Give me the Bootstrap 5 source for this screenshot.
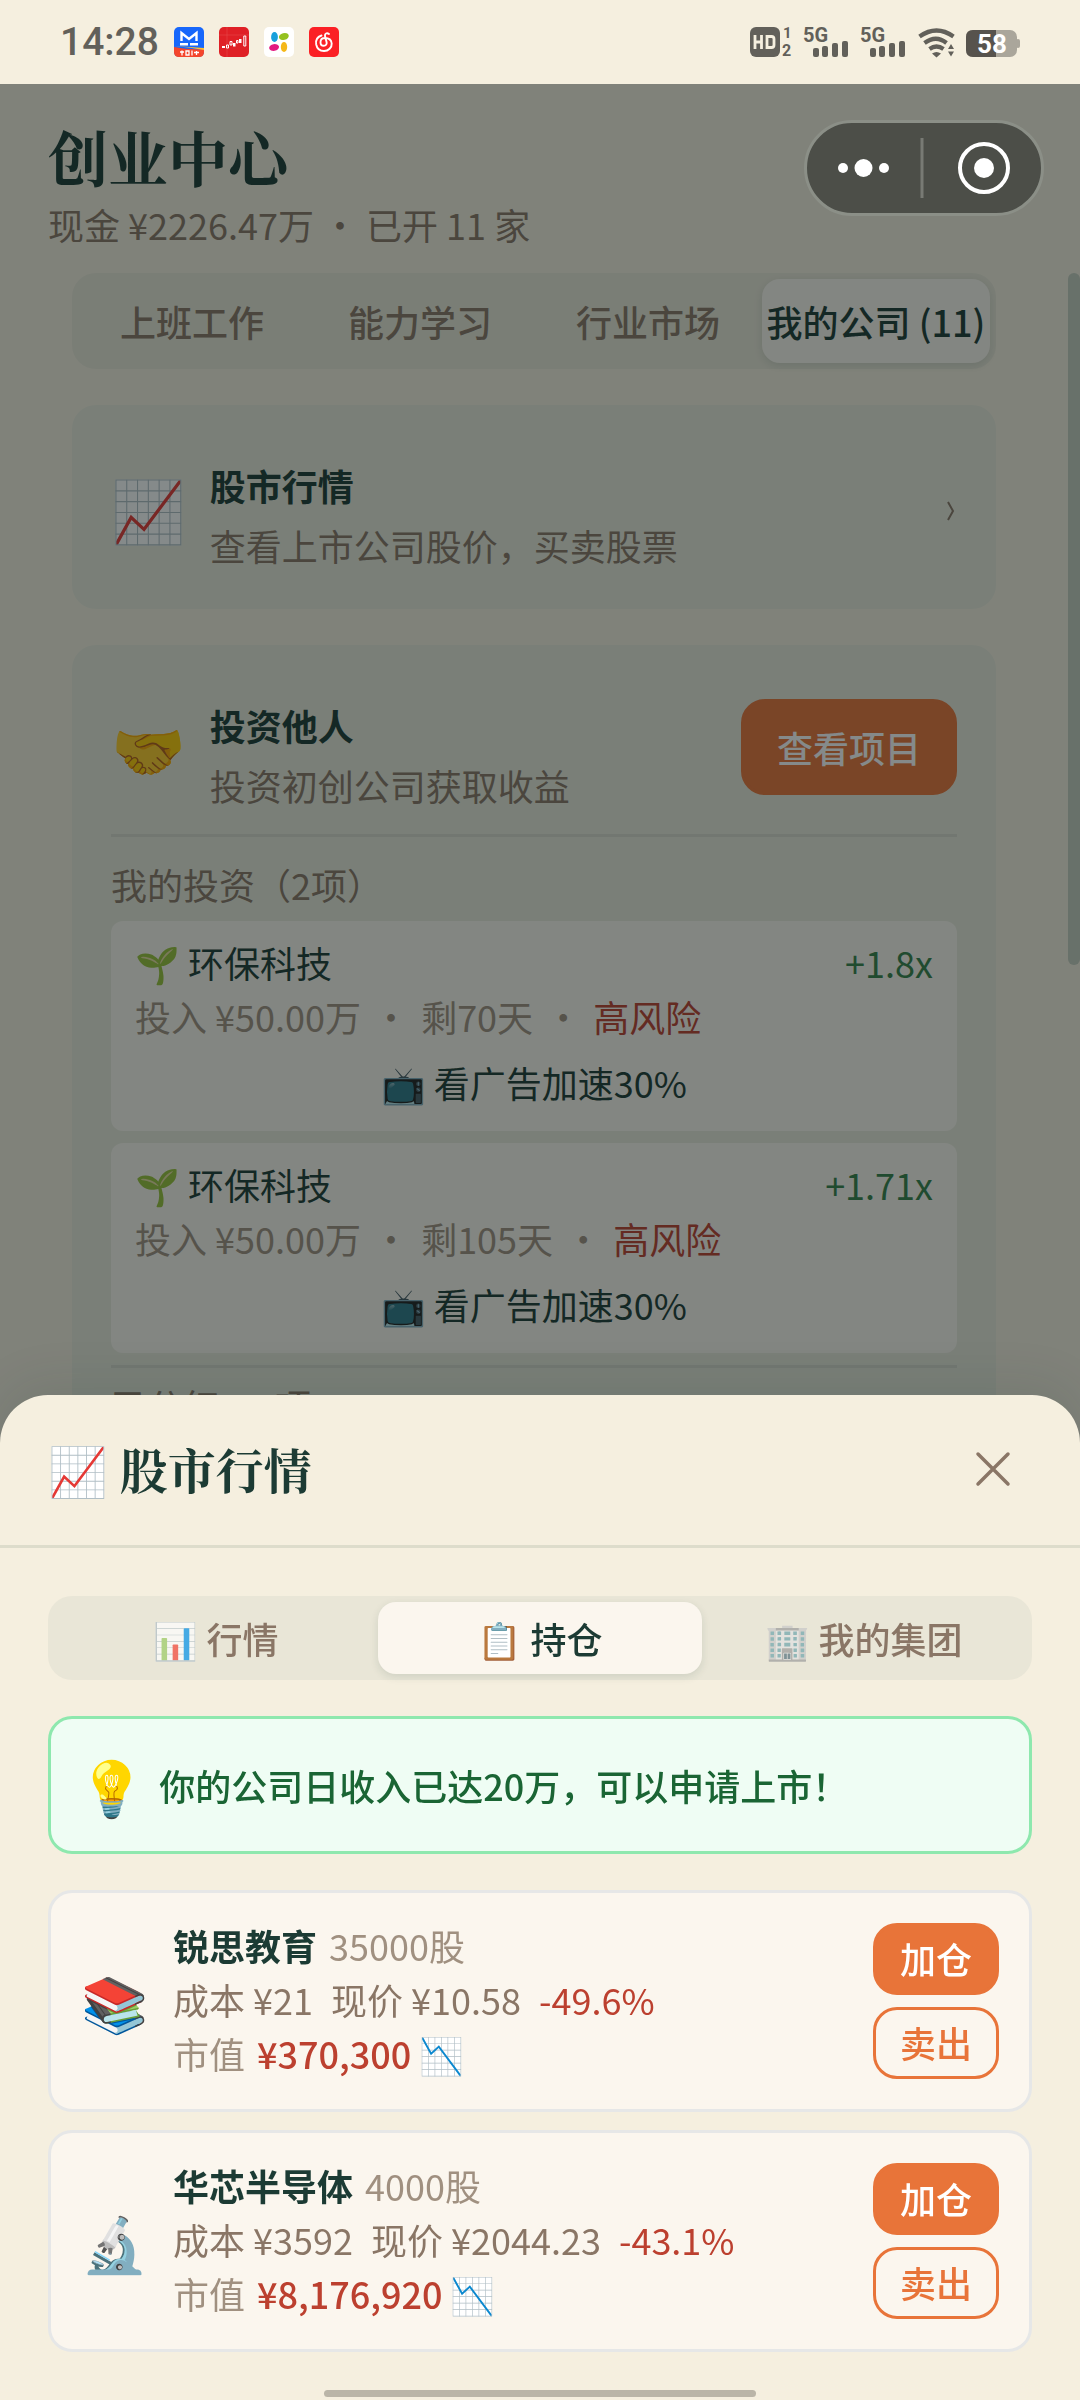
<!DOCTYPE html>
<html lang="zh-CN">
<head>
<meta charset="utf-8">
<meta name="viewport" content="width=device-width, initial-scale=1">
<title>创业中心</title>
<link href="https://cdn.jsdelivr.net/npm/bootstrap@5.3.0/dist/css/bootstrap.min.css" rel="stylesheet">
<style>
:root{--cream:#f5efdf;--ink:#1c3b34;--muted:#8a7666;--soft:#a09080;--orange:#e87439;--red:#bc402f;--paper:#fbf6ee}
body{font-family:"Noto Sans CJK SC","Noto Color Emoji",sans-serif;font-size:36px;line-height:54px;color:var(--ink);background:var(--cream)}
button{font-family:inherit}
.serif-title{font-family:"Noto Serif CJK SC","Noto Serif SC","Noto Color Emoji",serif;font-weight:700;margin:0}
.screen{min-height:100vh}
.status{height:84px;padding:0 54px 0 60px;background:var(--cream);color:#62605a}
.clock{font-family:Roboto,sans-serif;font-size:39px;font-weight:500}
.status-apps{gap:15px}
.page-head{padding:36px 36px 17px 48px}
.page-head h1{font-size:60px;line-height:72px}
.page-head p{line-height:64px;color:var(--muted)}
.capsule{width:240px;height:96px;background:#4c4e48;border:3px solid #8b8f87;border-radius:48px}
.page-body{padding:0 84px 0 72px}
.seg{background:#e9e6d7;border-radius:24px;padding:6px}
.seg .nav-link{padding:0;line-height:72px;border-radius:18px;color:var(--muted);font-weight:500;white-space:nowrap;flex:1 1 0;text-align:center}
.seg .nav-link.active{background:var(--paper);color:var(--ink);box-shadow:0 3px 9px rgba(28,59,52,.12)}
.seg-tall .nav-link{line-height:84px}
.faded{opacity:.7}
.panel{background:#e8e9db;border-radius:24px;padding:32px 39px;margin-top:36px}
.panel-text{padding-top:18px;padding-bottom:2px;line-height:60px}
.emoji-lg{font-size:60px;line-height:72px}
.muted{color:var(--muted)}
.soft{color:var(--soft)}
.good{color:#358049}
.bad{color:var(--red)}
.gap-24{gap:24px}
.btn-main{--bs-btn-bg:var(--orange);--bs-btn-color:#fff;--bs-btn-border-color:var(--orange);--bs-btn-hover-bg:#d5642c;--bs-btn-hover-color:#fff;font-size:36px;font-weight:500;line-height:54px;border-radius:24px;border-width:3px}
.btn-line{--bs-btn-bg:transparent;--bs-btn-color:var(--orange);--bs-btn-border-color:var(--orange);--bs-btn-hover-bg:var(--orange);--bs-btn-hover-color:#fff;font-size:36px;font-weight:500;line-height:54px;border-radius:24px;border-width:3px}
.btn-view{padding:18px 33px}
.rule{height:3px;background:#d8d8cd}
.rule-first{margin-top:17px}
.rule-last{margin:12px 0 10px}
.list-label{padding-top:20px;padding-bottom:10px}
.invest{background:var(--paper);border-radius:12px;padding:14px 24px 22px}
.invest + .invest{margin-top:12px}
.dot{margin:0 4px}
.btn-ad{display:block;width:100%;margin-top:12px;padding:0;border:0;background:none;color:var(--ink)}
.scroll-thumb{position:absolute;top:273px;right:0;width:12px;height:692px;border-radius:6px;background:#68716a}
.scrim{position:absolute;inset:84px 0 0 0;background:rgba(12,22,22,.5)}
.over-scrim{position:relative;z-index:3}
.sheet{z-index:5;background:var(--cream);border-radius:48px 48px 0 0;box-shadow:0 -12px 48px rgba(28,59,52,.1)}
.sheet-head{padding:33px 48px 36px;border-bottom:3px solid #dddccb}
.sheet-head h2{font-size:48px;line-height:81px}
.btn-x{width:80px;height:80px;margin-right:-1px;padding:0;border:0}
.sheet-body{padding:48px}
.tip{margin-top:36px;padding:0 27px;gap:14px;border:3px solid #8ee8ae;border-radius:24px;background:#effdf4;color:#1a6534;line-height:132px;font-weight:500}
.tip-icon{font-size:54px}
.holding{background:var(--paper);border:3px solid #e6e7e7;border-radius:24px;padding:25px 30px 26px}
.holding-first{margin-top:36px}
.holding + .holding{margin-top:18px}
.holding-text{padding-bottom:3px}
.emoji-md{font-size:54px;line-height:72px;width:68px}
.gap-text{gap:18px}
.gap-word{gap:12px}
.btn-trade{width:126px;padding:5px 0 7px}
.trade-col{gap:12px;padding:3px 0}
.home-bar{position:absolute;left:30%;right:30%;bottom:3px;height:7px;border-radius:4px;background:#bab5a8}
</style>
</head>
<body>
<div class="screen position-relative overflow-hidden">
  <header class="status d-flex justify-content-between align-items-center">
    <div class="d-flex align-items-center status-apps">
      <span class="clock">14:28</span>
      <svg width="30" height="30" viewBox="0 0 30 30"><rect width="30" height="30" rx="5" fill="#1767fb"/><path d="M7.500 14V6l7.500 6 7.500-6v8M6 17.300h8M16 17.300h8" stroke="#fff" stroke-width="2.400" fill="none"/><path d="M0 20q15 3 30 2v3q0 5-5 5H5q-5 0-5-5z" fill="#f4462c"/><path d="M0 19q14 1 30 4v-2q-15-1-30-2" fill="#ffc030"/><path d="M6 25h4M8 23.500v5M12 24h3v4h-3zM18 23.500v5M20 25.500h5M22.500 24v4" stroke="#fff" stroke-width="1.300" fill="none"/></svg>
      <svg width="30" height="30" viewBox="0 0 30 30"><rect width="30" height="30" rx="5" fill="#df2026"/><path d="M8 0v30M0 8h30" stroke="#e8474a" stroke-width=".6"/><path d="M3 19h3v2H3zM14 16h2.500v3.500H14zM20 12h2.500v4H20z" fill="#fff"/><path d="M7.500 18h2v3h-2zM11 14.500h2V18h-2zM17.500 13.500h1.500v2.500h-1.500zM24.800 9h2v10h-2z" fill="none" stroke="#fff"/></svg>
      <svg width="30" height="30" viewBox="0 0 30 30"><rect width="30" height="30" rx="5" fill="#fff"/><ellipse cx="10.500" cy="10" rx="3.400" ry="5" fill="#18a0dc"/><ellipse cx="20" cy="9.500" rx="5" ry="3.400" fill="#94c11f" transform="rotate(-15 20 10)"/><ellipse cx="10" cy="20.500" rx="5" ry="3.400" fill="#e31a80" transform="rotate(-10 10 20)"/><ellipse cx="20" cy="20" rx="3.200" ry="5" fill="#f5b81a"/></svg>
      <svg width="30" height="30" viewBox="0 0 30 30"><rect width="30" height="30" rx="5" fill="#fb2025"/><path d="M12.500 8.500C8 10 6.500 13.500 7.200 17.500 8 21.500 11 24 15 24c4.500 0 8-3.500 7.700-7.500-.4-3.500-3-5.500-6.700-5.500-2.800 0-4.500 1.800-4.500 4.200 0 2.200 1.500 3.600 3.300 3.600 2 0 3.200-1.600 2.800-3.600L16 9c-.3-2.500 1.800-3.500 4-2" fill="none" stroke="#fff" stroke-width="1.900" stroke-linecap="round"/></svg>
    </div>
    <svg width="276" height="84" viewBox="750 0 276 84" fill="#62605a">
      <rect x="750" y="27" width="30" height="30" rx="6"/><path d="M755 35v14m6.500-14v14m-6.500-7h6.500M767 36.500v11h4.500q2.500 0 2.500-2.500v-6q0-2.500-2.500-2.500z" fill="none" stroke="#f5efdf" stroke-width="2.800"/>
      <g font-family="Roboto, sans-serif" font-weight="700"><text x="783" y="38" font-size="15">1</text><text x="782" y="56" font-size="16">2</text><text x="803" y="42" font-size="20">5G</text><text x="860" y="42" font-size="20">5G</text></g>
      <g id="bars"><rect x="813" y="48" width="6" height="9" rx="2"/><rect x="822" y="46" width="6" height="11" rx="2"/><rect x="832" y="43" width="6" height="14" rx="2"/><rect x="842" y="41" width="6" height="16" rx="2"/></g>
      <use href="#bars" x="57"/>
      <path d="M919.500 36.500q17-12 34 0M924.500 43q11.500-8.500 22 0M929.500 49q7-5 14 0" fill="none" stroke="#62605a" stroke-width="4.200"/><path d="M932 53.500q4.500-3 9 0l-4.500 4zM948 49l3-5 3 5zM948 51.500h6l-3 5z"/>
      <rect x="966" y="30" width="51" height="27" rx="7" fill="#aaa69b"/><rect x="1016" y="39" width="4" height="9" rx="2" fill="#aaa69b"/><path d="M996 30h-23q-7 0-7 7v13q0 7 7 7h23z" fill="#57534d"/>
      <text x="977" y="53" font-size="26" font-weight="700" fill="#fff" font-family="Roboto, sans-serif">58</text>
    </svg>
  </header>

  <div class="page-head d-flex justify-content-between align-items-start">
    <div><h1 class="serif-title">创业中心</h1><p class="mb-0">现金 ¥2226.47万 • 已开 11 家</p></div>
    <svg class="capsule over-scrim" viewBox="0 0 234 90" role="img" aria-label="菜单"><g fill="#fff"><circle cx="36" cy="45" r="5"/><circle cx="56.500" cy="45" r="9"/><circle cx="77" cy="45" r="5"/><circle cx="177" cy="45" r="10"/></g><path d="M115 15v60" stroke="#787a74" stroke-width="3"/><circle cx="177" cy="45" r="24" fill="none" stroke="#fff" stroke-width="4"/></svg>
  </div>

  <main class="page-body">
    <nav class="nav seg seg-tall flex-nowrap">
      <a class="nav-link" href="#">上班工作</a><a class="nav-link" href="#">能力学习</a><a class="nav-link" href="#">行业市场</a><a class="nav-link active" href="#">我的公司 (11)</a>
    </nav>
    <section class="panel d-flex align-items-center gap-24">
      <span class="emoji-lg">📈</span>
      <div class="panel-text flex-grow-1"><div class="fw-bold">股市行情</div><div class="muted">查看上市公司股价，买卖股票</div></div>
      <svg class="mt-2" width="12" height="22" viewBox="0 0 12 22" fill="none" stroke="#8a7666" stroke-width="2"><path d="M3 2l5 9-5 9"/></svg>
    </section>
    <section class="panel">
      <div class="d-flex align-items-center gap-24">
        <span class="emoji-lg">🤝</span>
        <div class="panel-text flex-grow-1"><div class="fw-bold">投资他人</div><div class="muted">投资初创公司获取收益</div></div>
        <button class="btn btn-main btn-view" type="button">查看项目</button>
      </div>
      <div class="rule rule-first"></div>
      <div class="list-label muted">我的投资（2项）</div>
      <article class="invest">
        <div class="d-flex justify-content-between"><span>🌱 环保科技</span><span class="good">+1.8x</span></div>
        <div class="soft">投入 ¥50.00万 <span class="dot">•</span> 剩70天 <span class="dot">•</span> <span class="bad">高风险</span></div>
        <button class="btn-ad" type="button">📺 看广告加速30%</button>
      </article>
      <article class="invest">
        <div class="d-flex justify-content-between"><span>🌱 环保科技</span><span class="good">+1.71x</span></div>
        <div class="soft">投入 ¥50.00万 <span class="dot">•</span> 剩105天 <span class="dot">•</span> <span class="bad">高风险</span></div>
        <button class="btn-ad" type="button">📺 看广告加速30%</button>
      </article>
      <div class="rule rule-last"></div>
      <div class="muted">已分红：4项</div>
    </section>
  </main>
  <div class="scrim"></div>
  <div class="scroll-thumb"></div>

  <section class="sheet fixed-bottom" aria-labelledby="sheet-title">
    <div class="sheet-head d-flex justify-content-between align-items-center">
      <h2 class="serif-title" id="sheet-title">📈 股市行情</h2>
      <button class="btn btn-x" type="button" aria-label="关闭"><svg width="36" height="36" viewBox="0 0 36 36" stroke="#8a7666" stroke-width="3.500" stroke-linecap="round"><path d="M3 3l30 30M33 3L3 33"/></svg></button>
    </div>
    <div class="sheet-body">
      <nav class="nav seg flex-nowrap">
        <a class="nav-link" href="#"><span class="faded">📊</span> 行情</a><a class="nav-link active" href="#">📋 持仓</a><a class="nav-link" href="#"><span class="faded">🏢</span> 我的集团</a>
      </nav>
      <div class="tip d-flex align-items-center" role="status"><span class="tip-icon">💡</span><span>你的公司日收入已达20万，可以申请上市！</span></div>
      <div class="holding-first">
        <article class="holding d-flex align-items-center gap-24">
          <span class="emoji-md">📚</span>
          <div class="holding-text flex-grow-1">
            <div class="d-flex gap-word"><b>锐思教育</b><span class="soft">35000股</span></div>
            <div class="d-flex gap-text muted"><span>成本 ¥21</span><span>现价 ¥10.58</span><span class="bad">-49.6%</span></div>
            <div class="d-flex gap-word soft"><span>市值</span><span><span class="bad fw-medium">¥370,300</span> 📉</span></div>
          </div>
          <div class="trade-col d-flex flex-column"><button class="btn btn-main btn-trade" type="button">加仓</button><button class="btn btn-line btn-trade" type="button">卖出</button></div>
        </article>
        <article class="holding d-flex align-items-center gap-24">
          <span class="emoji-md">🔬</span>
          <div class="holding-text flex-grow-1">
            <div class="d-flex gap-word"><b>华芯半导体</b><span class="soft">4000股</span></div>
            <div class="d-flex gap-text muted"><span>成本 ¥3592</span><span>现价 ¥2044.23</span><span class="bad">-43.1%</span></div>
            <div class="d-flex gap-word soft"><span>市值</span><span><span class="bad fw-medium">¥8,176,920</span> 📉</span></div>
          </div>
          <div class="trade-col d-flex flex-column"><button class="btn btn-main btn-trade" type="button">加仓</button><button class="btn btn-line btn-trade" type="button">卖出</button></div>
        </article>
      </div>
    </div>
    <div class="home-bar"></div>
  </section>
</div>
<script src="https://cdn.jsdelivr.net/npm/bootstrap@5.3.0/dist/js/bootstrap.bundle.min.js"></script>
</body>
</html>
